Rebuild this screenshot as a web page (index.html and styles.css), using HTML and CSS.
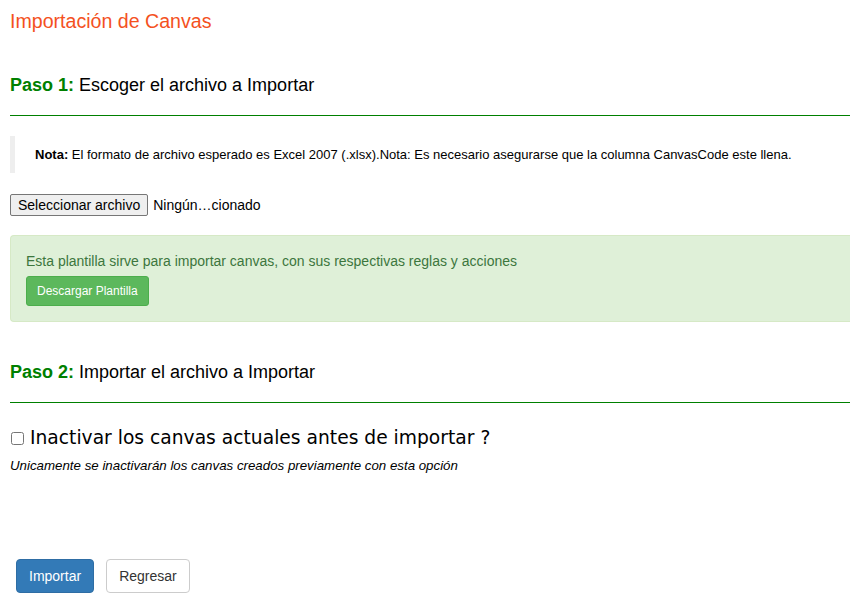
FILE: index.html
```html
<!DOCTYPE html>
<html lang="es">
<head>
    <meta charset="UTF-8">
    <title>Importación de Canvas</title>
    <link rel="stylesheet" href="styles.css">
</head>
<body>
    <h3 class="page-title">Importación de Canvas</h3>

    <h4 class="step step-first"><span class="step-num">Paso 1:</span> Escoger el archivo a Importar</h4>
    <hr class="step-line">

    <blockquote class="note">
        <p><b>Nota:</b> El formato de archivo esperado es Excel 2007 (.xlsx).Nota: Es necesario asegurarse que la columna CanvasCode este llena.</p>
    </blockquote>

    <!-- file picker -->
    <div class="file-row">
        <button type="button" class="file-btn">Seleccionar archivo</button>
        <span class="file-name">Ningún…cionado</span>
    </div>

    <div class="alert-success">
        <p>Esta plantilla sirve para importar canvas, con sus respectivas reglas y acciones</p>
        <button type="button" class="btn btn-success btn-sm">Descargar Plantilla</button>
    </div>

    <h4 class="step step-second"><span class="step-num">Paso 2:</span> Importar el archivo a Importar</h4>
    <hr class="step-line">

    <label class="check-row">
        <input type="checkbox" class="check-box">
        <span>Inactivar los canvas actuales antes de importar ?</span>
    </label>
    <p class="hint">Unicamente se inactivarán los canvas creados previamente con esta opción</p>

    <div class="actions">
        <button type="button" class="btn btn-primary">Importar</button>
        <button type="button" class="btn btn-default">Regresar</button>
    </div>
</body>
</html>
```

FILE: styles.css
```css
html, body {
    margin: 0;
    padding: 0;
}

body {
    padding: 10px 0 0 10px;
    font-family: "Liberation Sans", Arial, sans-serif;
    color: #000;
    background: #fff;
    overflow-x: hidden;
}

.page-title {
    margin: 0;
    font-size: 19.6px;
    font-weight: normal;
    line-height: 22px;
    color: #f4511e;
}

.step {
    margin: 0;
    font-size: 18px;
    font-weight: normal;
    line-height: 20px;
}

.step-first {
    margin-top: 43px;
}

.step-second {
    margin-top: 40px;
}

.step-num {
    color: #008000;
    font-weight: bold;
}

.step-line {
    margin: 20px 0 0;
    border: none;
    border-top: 1px solid #008000;
    height: 0;
}

.note {
    margin: 20px 0 0;
    padding: 10px 20px;
    border-left: 5px solid #eee;
    font-size: 13px;
    line-height: 17px;
}

.note p {
    margin: 0;
}

.file-row {
    margin-top: 21px;
    height: 22px;
    display: flex;
    align-items: center;
    gap: 5px;
    font-size: 14px;
}

.file-btn {
    box-sizing: border-box;
    height: 22px;
    font-family: "Liberation Sans", Arial, sans-serif;
    font-size: 14px;
    padding: 1px 7px;
    background: #efefef;
    border: 1px solid #767676;
    border-radius: 2px;
    color: #000;
}

.alert-success {
    margin-top: 19px;
    padding: 15px;
    background-color: #dff0d8;
    border: 1px solid #d6e9c6;
    border-right: none;
    border-radius: 4px 0 0 4px;
    color: #3c763d;
    font-size: 14px;
    line-height: 20px;
}

.alert-success p {
    margin: 0 0 5px;
}

.btn {
    display: inline-block;
    padding: 6px 12px;
    font-family: "Liberation Sans", Arial, sans-serif;
    font-size: 14px;
    line-height: 20px;
    border: 1px solid transparent;
    border-radius: 4px;
    cursor: pointer;
}

.btn-sm {
    padding: 5px 10px;
    font-size: 12px;
    line-height: 18px;
    border-radius: 3px;
}

.btn-success {
    color: #fff;
    background-color: #5cb85c;
    border-color: #4cae4c;
}

.btn-primary {
    color: #fff;
    background-color: #337ab7;
    border-color: #2e6da4;
}

.btn-default {
    color: #333;
    background-color: #fff;
    border-color: #ccc;
}

.check-row {
    margin-top: 23px;
    display: flex;
    align-items: center;
    gap: 6px;
    font-family: "DejaVu Sans", sans-serif;
    font-size: 18.7px;
    line-height: 24px;
}

.check-box {
    margin: 0 0 0 1px;
    width: 13px;
    height: 13px;
}

.hint {
    margin: 8px 0 0;
    font-size: 13.3px;
    font-style: italic;
    line-height: 15px;
}

.actions {
    margin-top: 86px;
    padding-left: 6px;
    display: flex;
    gap: 12px;
}
```
